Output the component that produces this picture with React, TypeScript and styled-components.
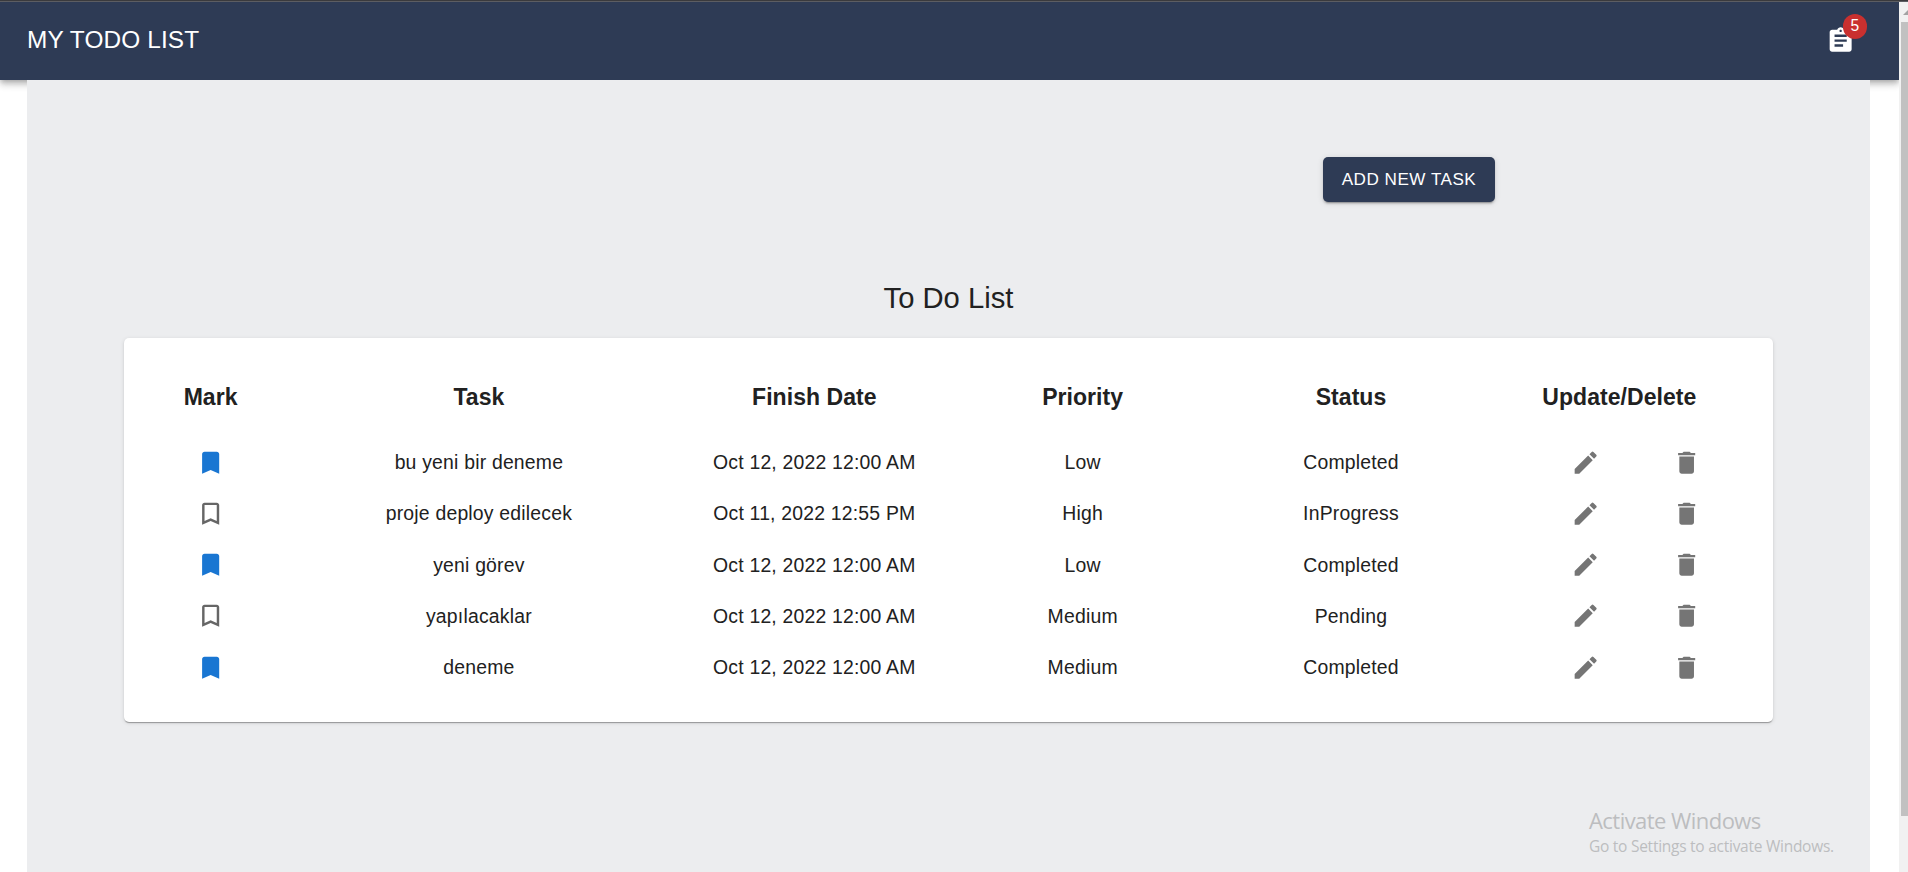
import React from "react";
import styled, { createGlobalStyle } from "styled-components";
import { MdAssignment, MdBookmark, MdBookmarkBorder, MdDelete, MdEdit } from "react-icons/md";

const GlobalStyle = createGlobalStyle`
  * { box-sizing: border-box; }
  body {
    margin: 0;
    overflow: hidden;
    background: #fff;
    color: #212121;
    font-family: "Liberation Sans", Arial, sans-serif;
  }
`;

const Screen = styled.div`
  display: grid;
  grid-template-rows: 2px 870px;
  grid-template-columns: 1899px 9px;
  position: relative;
  height: 872px;
`;

const WindowEdge = styled.div`
  grid-column: 1 / -1;
  background: #3a3a3d;
  border-bottom: 1px solid #5c5d62;
`;

const Page = styled.div`
  display: flex;
  flex-direction: column;
  overflow: hidden;
`;

const AppBar = styled.header`
  display: flex;
  align-items: center;
  justify-content: space-between;
  flex: none;
  height: 78px;
  padding: 0 44px 0 27px;
  background: #2e3b55;
  color: #fff;
  box-shadow: 0 2px 5px -1px rgba(0, 0, 0, 0.2), 0 5px 6px 0 rgba(0, 0, 0, 0.14),
    0 1px 12px 0 rgba(0, 0, 0, 0.12);
`;

const Brand = styled.h1`
  margin: 0;
  padding-bottom: 4px;
  font-size: 24.4px;
  font-weight: 400;
  letter-spacing: 0.12px;
  line-height: 39px;
`;

const TaskCounter = styled.div`
  position: relative;
  display: flex;
  font-size: 29.3px;
`;

const Badge = styled.span`
  position: absolute;
  top: -12px;
  right: -12px;
  width: 24.4px;
  height: 24.4px;
  border-radius: 50%;
  background: #c9302f;
  font-size: 15.6px;
  line-height: 24px;
  text-align: center;
`;

const Content = styled.main`
  display: flex;
  flex-direction: column;
  flex: 1;
  position: relative;
  margin: 0 29px 0 27px;
  padding: 77px 97px 0;
  background: #ecedef;
`;

const AddButton = styled.button`
  align-self: flex-start;
  width: 172px;
  height: 45px;
  margin-left: 1199px;
  padding: 0;
  border: 0;
  border-radius: 5px;
  background: #2e3b55;
  color: #fff;
  font-family: inherit;
  font-size: 17.1px;
  letter-spacing: 0.5px;
  white-space: nowrap;
  box-shadow: 0 3px 1px -2px rgba(0, 0, 0, 0.2), 0 2px 2px 0 rgba(0, 0, 0, 0.14),
    0 1px 6px 0 rgba(0, 0, 0, 0.12);
`;

const ListTitle = styled.h2`
  margin: 76px 0 20px;
  font-size: 29.2px;
  font-weight: 400;
  line-height: 40px;
  text-align: center;
`;

const Card = styled.section`
  height: 383.5px;
  padding: 19.5px;
  border-radius: 5px;
  background: #fff;
  box-shadow: 0 2px 1px -1px rgba(0, 0, 0, 0.2), 0 1px 1px 0 rgba(0, 0, 0, 0.14),
    0 1px 4px 0 rgba(0, 0, 0, 0.12);
`;

const Row = styled.div<{ $head?: boolean }>`
  display: grid;
  grid-template-columns: 1fr 3fr 2fr 2fr 2fr 2fr;
  align-items: center;
  justify-items: center;
  height: ${(p) => (p.$head ? "79.8px" : "51.1px")};
  font-size: ${(p) => (p.$head ? "23px" : "19.4px")};
  font-weight: ${(p) => (p.$head ? 700 : 400)};
  letter-spacing: ${(p) => (p.$head ? "0.05px" : "0.2px")};
  white-space: nowrap;
`;

const Mark = styled.span<{ $on: boolean }>`
  display: flex;
  font-size: 29.3px;
  color: ${(p) => (p.$on ? "#1976d2" : "#666")};
`;

const Actions = styled.div`
  display: flex;
  gap: 72px;
  padding-left: 34px;
  font-size: 29.3px;
  color: #757575;
`;

const Scrollbar = styled.div`
  display: flex;
  flex-direction: column;
  align-items: flex-end;
  overflow: hidden;
  background: #f1f1f1;
`;

const ScrollArrow = styled.svg`
  display: block;
  width: 7px;
  height: 20px;
`;

const ScrollThumb = styled.div`
  width: 7px;
  height: 794px;
  background: #c1c1c1;
`;

const Watermark = styled.aside`
  position: absolute;
  left: 1589px;
  top: 805px;
  color: #bcbdbf;
  font-family: "Open Sans", "Noto Sans", sans-serif;
  font-weight: 400;
  white-space: nowrap;
`;

const WatermarkTitle = styled.div`
  font-size: 22px;
  letter-spacing: -0.55px;
  line-height: 31px;
`;

const WatermarkText = styled.div`
  font-size: 15.5px;
  letter-spacing: -0.26px;
  line-height: 20px;
`;

const headings = ["Mark", "Task", "Finish Date", "Priority", "Status", "Update/Delete"];

const tasks = [
  { marked: true, name: "bu yeni bir deneme", date: "Oct 12, 2022 12:00 AM", priority: "Low", status: "Completed" },
  { marked: false, name: "proje deploy edilecek", date: "Oct 11, 2022 12:55 PM", priority: "High", status: "InProgress" },
  { marked: true, name: "yeni görev", date: "Oct 12, 2022 12:00 AM", priority: "Low", status: "Completed" },
  { marked: false, name: "yapılacaklar", date: "Oct 12, 2022 12:00 AM", priority: "Medium", status: "Pending" },
  { marked: true, name: "deneme", date: "Oct 12, 2022 12:00 AM", priority: "Medium", status: "Completed" },
];

export default function App() {
  return (
    <Screen>
      <GlobalStyle />
      <WindowEdge />
      <Page>
        <AppBar>
          <Brand>MY TODO LIST</Brand>
          <TaskCounter>
            <MdAssignment />
            <Badge>{tasks.length}</Badge>
          </TaskCounter>
        </AppBar>
        <Content>
          <AddButton>ADD NEW TASK</AddButton>
          <ListTitle>To Do List</ListTitle>
          <Card>
            <Row $head>
              {headings.map((h) => (
                <span key={h}>{h}</span>
              ))}
            </Row>
            {tasks.map((t) => (
              <Row key={t.name}>
                <Mark $on={t.marked}>{t.marked ? <MdBookmark /> : <MdBookmarkBorder />}</Mark>
                <span>{t.name}</span>
                <span>{t.date}</span>
                <span>{t.priority}</span>
                <span>{t.status}</span>
                <Actions>
                  <MdEdit />
                  <MdDelete />
                </Actions>
              </Row>
            ))}
          </Card>
        </Content>
      </Page>
      <Scrollbar>
        <ScrollArrow viewBox="0 0 7 20">
          <path d="M2 13 L7 8 V13 Z" fill="#a3a3a3" />
        </ScrollArrow>
        <ScrollThumb />
      </Scrollbar>
      <Watermark>
        <WatermarkTitle>Activate Windows</WatermarkTitle>
        <WatermarkText>Go to Settings to activate Windows.</WatermarkText>
      </Watermark>
    </Screen>
  );
}
